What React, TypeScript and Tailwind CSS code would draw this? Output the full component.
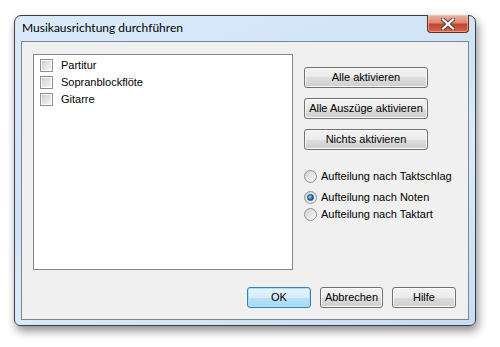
import React from 'react';

const font = { fontFamily: '"Liberation Sans", Arial, sans-serif' };

const Checkbox: React.FC<{ label: string }> = ({ label }) => (
  <div className="flex h-[17px] items-center gap-[8px]">
    <div className="h-[13px] w-[13px] border border-[#8e8f8f] bg-white p-[1px]">
      <div className="h-full w-full bg-[linear-gradient(135deg,#cbcfd5,#f6f6f6)]" />
    </div>
    <span className="text-[11px] text-black">{label}</span>
  </div>
);

const Radio: React.FC<{ label: string; checked?: boolean }> = ({ label, checked }) => (
  <div className="flex h-[17px] items-center gap-[4px]">
    <div className="flex h-[13px] w-[13px] items-center justify-center rounded-full border border-[#8e8f8f] bg-[linear-gradient(135deg,#cfd2d6,#f8f8f8)]">
      {checked && (
        <div className="h-[7px] w-[7px] rounded-full border border-[#17456e] bg-[radial-gradient(circle_at_35%_35%,#9fd7ff,#1f6fb8_60%,#0d3f73)]" />
      )}
    </div>
    <span className="text-[11px] text-black">{label}</span>
  </div>
);

const Button: React.FC<{ label: string; w: string; primary?: boolean }> = ({ label, w, primary }) => (
  <div
    className={`flex h-[21px] ${w} items-center justify-center rounded-[3px] border text-[11px] text-black ${
      primary
        ? 'border-[#3c7fb1] bg-[linear-gradient(#e5f4fc_0%,#d6edfa_50%,#b9e1f8_50%,#a8d8f5_100%)] shadow-[inset_0_0_0_1px_#a7e0fb]'
        : 'border-[#707070] bg-[linear-gradient(#f2f2f2_0%,#ebebeb_50%,#dddddd_50%,#cfcfcf_100%)] shadow-[inset_0_0_0_1px_#fcfcfc]'
    }`}
  >
    {label}
  </div>
);

const App: React.FC = () => {
  return (
    <div className="h-[347px] w-[500px] bg-white pl-[14px] pt-[15px]" style={font}>
      <div className="flex h-[311px] w-[462px] flex-col rounded-t-[7px] rounded-b-[6px] border border-[#3c3f44] bg-[linear-gradient(160deg,#d9eafa_0%,#cfe3f6_45%,#dcebf9_60%,#c6ddf3_100%)] px-[6px] pb-[5px] shadow-[2px_5px_10px_rgba(0,0,0,0.45)]">
        <div className="flex h-[25px] items-start justify-between">
          <span
            className="pl-[1px] pt-[4px] text-[12px] leading-[16px] text-black"
            style={{ fontFamily: 'Lato, "Liberation Sans", sans-serif' }}
          >
            Musikausrichtung durchführen
          </span>
          <div className="-mt-px flex h-[18px] w-[42px] items-center justify-center rounded-b-[4px] border border-t-0 border-[#6d2a1f] bg-[linear-gradient(#eab1a2_0%,#d98a75_45%,#c2472d_55%,#d2654a_100%)] shadow-[inset_0_0_0_1px_rgba(255,210,200,0.5)]">
            <svg width="14" height="12" viewBox="0 0 14 12">
              <path d="M2 1.5 L12 10.5 M12 1.5 L2 10.5" stroke="#4a3b3b" strokeWidth="4" strokeLinecap="square" />
              <path d="M2 1.5 L12 10.5 M12 1.5 L2 10.5" stroke="#ffffff" strokeWidth="2.2" strokeLinecap="square" />
            </svg>
          </div>
        </div>
        <div className="flex flex-1 flex-col border border-[#7a8694] bg-[#f0f0f0] pb-[11px] pl-[11px] pr-[12px] pt-[12px]">
          <div className="flex gap-[11px]">
            <div className="flex h-[216px] w-[260px] flex-col border border-[#828790] bg-white pl-[6px] pt-[2px]">
              <Checkbox label="Partitur" />
              <Checkbox label="Sopranblockflöte" />
              <Checkbox label="Gitarre" />
            </div>
            <div className="flex flex-col pt-[13px]">
              <div className="flex flex-col gap-[10px]">
                <Button label="Alle aktivieren" w="w-[124px]" />
                <Button label="Alle Auszüge aktivieren" w="w-[124px]" />
                <Button label="Nichts aktivieren" w="w-[124px]" />
              </div>
              <div className="mt-[18px] flex flex-col">
                <Radio label="Aufteilung nach Taktschlag" />
                <div className="mt-[4px]">
                  <Radio label="Aufteilung nach Noten" checked />
                </div>
                <Radio label="Aufteilung nach Taktart" />
              </div>
            </div>
          </div>
          <div className="mt-[17px] flex justify-end gap-[9px]">
            <Button label="OK" w="w-[64px]" primary />
            <Button label="Abbrechen" w="w-[63px]" />
            <Button label="Hilfe" w="w-[64px]" />
          </div>
        </div>
      </div>
    </div>
  );
};

export default App;
